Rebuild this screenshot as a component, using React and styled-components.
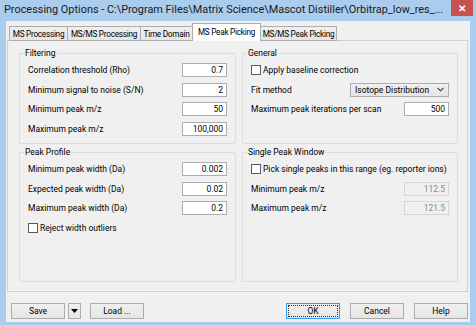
import React from "react";
import styled, { createGlobalStyle } from "styled-components";

const GlobalStyle = createGlobalStyle`
  html, body { margin: 0; padding: 0; background: #ffffff; }
  body { font-family: Roboto, "Liberation Sans", sans-serif; color: #000; }
`;

const Window = styled.div`
  width: 476px;
  height: 325px;
  background: #aacdee;
  display: flex;
  flex-direction: column;
  overflow: hidden;
`;

const TitleBar = styled.div`
  height: 21px;
  flex: none;
  display: flex;
  align-items: flex-start;
`;

const Title = styled.div`
  flex: 1;
  min-width: 0;
  padding: 3px 0 0 4px;
  font-size: 10.9px;
  line-height: 14px;
  color: #1a1a1a;
  white-space: nowrap;
  overflow: hidden;
`;

const CloseButton = styled.div`
  width: 22px;
  height: 16px;
  margin: 0 3px 0 4px;
  background: #c75050;
  color: #fff;
  display: flex;
  align-items: center;
  justify-content: center;
  font-size: 10px;
  font-weight: bold;
`;

const Client = styled.div`
  flex: 1;
  margin: 0 6px 3px 6px;
  background: #f0f0f0;
  padding: 3px 2px 0 1px;
  display: flex;
  flex-direction: column;
  font-size: 8.5px;
`;

const TabStrip = styled.div`
  height: 17px;
  display: flex;
  align-items: flex-end;
  padding-left: 2px;
  position: relative;
  z-index: 1;
  margin-bottom: -1px;
`;

const Tab = styled.div`
  width: ${(p) => p.$w}px;
  height: ${(p) => (p.$active ? 18 : 15)}px;
  margin-left: -1px;
  box-sizing: border-box;
  border: 1px solid #acacac;
  border-bottom: ${(p) => (p.$active ? "none" : "1px solid #acacac")};
  background: ${(p) => (p.$active ? "#ffffff" : "linear-gradient(#f0f0f0, #e5e5e5)")};
  display: flex;
  align-items: center;
  justify-content: center;
  white-space: nowrap;
  overflow: hidden;
  font-size: 8.2px;
  letter-spacing: -0.25px;
  padding-bottom: ${(p) => (p.$active ? 2 : 0)}px;
  &:first-child { margin-left: 0; }
`;

const Panel = styled.div`
  height: 252px;
  box-sizing: border-box;
  border: 1px solid #d0d0d0;
  background: #f0f0f0;
  display: grid;
  grid-template-columns: 217px 216px;
  grid-template-rows: 96px 135px;
  column-gap: 6px;
  row-gap: 3px;
  padding: 7px 0 0 11px;
`;

const Group = styled.fieldset`
  margin: 0;
  padding: 4px 8px 0 8px;
  border: 1px solid #dcdcdc;
  border-radius: 2px;
  min-width: 0;
  box-sizing: border-box;
`;

const Legend = styled.legend`
  padding: 0 1px;
  margin-left: -4px;
  line-height: 11px;
`;

const Rows = styled.div`
  display: flex;
  flex-direction: column;
  gap: 5.7px;
`;

const Row = styled.div`
  height: 14px;
  display: flex;
  align-items: center;
  justify-content: space-between;
  white-space: nowrap;
`;

const Field = styled.div`
  width: ${(p) => p.$w || 45}px;
  height: 14px;
  box-sizing: border-box;
  border: 1px solid ${(p) => (p.$disabled ? "#d5d5d5" : "#abadb3")};
  background: ${(p) => (p.$disabled ? "#f0f0f0" : "#ffffff")};
  color: ${(p) => (p.$disabled ? "#8a8a8a" : "#000")};
  text-align: right;
  padding-right: 3px;
  line-height: 12px;
`;

const Check = styled.label`
  display: flex;
  align-items: center;
  gap: 2px;
  white-space: nowrap;
`;

const Box = styled.span`
  width: 10px;
  height: 10px;
  box-sizing: border-box;
  border: 1px solid #5a5a5a;
  background: #fff;
`;

const Select = styled.div`
  width: 99px;
  height: 14px;
  box-sizing: border-box;
  border: 1px solid #acacac;
  background: linear-gradient(#f0f0f0, #e5e5e5);
  display: flex;
  align-items: center;
  justify-content: space-between;
  padding: 0 4px 0 4px;
`;

const Footer = styled.div`
  display: flex;
  align-items: center;
  margin-top: 11px;
  padding-left: 4px;
`;

const Button = styled.div`
  width: ${(p) => p.$w || 54}px;
  height: 16px;
  box-sizing: border-box;
  border: 1px solid ${(p) => (p.$default ? "#3399ff" : "#acacac")};
  background: linear-gradient(#f0f0f0, #e5e5e5);
  display: flex;
  align-items: center;
  justify-content: center;
  margin-left: ${(p) => p.$gap || 0}px;
  outline: ${(p) => (p.$default ? "1px dotted #333" : "none")};
  outline-offset: -3px;
`;

const Spacer = styled.div`
  flex: 1;
`;

const Chevron = () => (
  <svg width="7" height="5" viewBox="0 0 7 5">
    <polyline points="0.5,0.8 3.5,3.8 6.5,0.8" fill="none" stroke="#333" strokeWidth="1.1" />
  </svg>
);

const Triangle = () => (
  <svg width="7" height="4" viewBox="0 0 7 4">
    <polygon points="0,0 7,0 3.5,4" fill="#000" />
  </svg>
);

const NumRow = ({ label, value, disabled }) => (
  <Row>
    <span>{label}</span>
    <Field $disabled={disabled}>{value}</Field>
  </Row>
);

const App = () => {
  return (
    <>
      <GlobalStyle />
      <Window>
        <TitleBar>
          <Title>Processing Options - C:\Program Files\Matrix Science\Mascot Distiller\Orbitrap_low_res_...</Title>
          <CloseButton>✕</CloseButton>
        </TitleBar>
        <Client>
          <TabStrip>
            <Tab $w={59}>MS Processing</Tab>
            <Tab $w={74}>MS/MS Processing</Tab>
            <Tab $w={53}>Time Domain</Tab>
            <Tab $w={69} $active>MS Peak Picking</Tab>
            <Tab $w={77}>MS/MS Peak Picking</Tab>
          </TabStrip>
          <Panel>
            <Group>
              <Legend>Filtering</Legend>
              <Rows>
                <NumRow label="Correlation threshold (Rho)" value="0.7" />
                <NumRow label="Minimum signal to noise (S/N)" value="2" />
                <NumRow label="Minimum peak m/z" value="50" />
                <NumRow label="Maximum peak m/z" value="100,000" />
              </Rows>
            </Group>
            <Group>
              <Legend>General</Legend>
              <Rows>
                <Row>
                  <Check><Box />Apply baseline correction</Check>
                </Row>
                <Row>
                  <span>Fit method</span>
                  <Select>
                    <span>Isotope Distribution</span>
                    <Chevron />
                  </Select>
                </Row>
                <NumRow label="Maximum peak iterations per scan" value="500" />
              </Rows>
            </Group>
            <Group>
              <Legend>Peak Profile</Legend>
              <Rows>
                <NumRow label="Minimum peak width (Da)" value="0.002" />
                <NumRow label="Expected peak width (Da)" value="0.02" />
                <NumRow label="Maximum peak width (Da)" value="0.2" />
                <Row>
                  <Check><Box />Reject width outliers</Check>
                </Row>
              </Rows>
            </Group>
            <Group>
              <Legend>Single Peak Window</Legend>
              <Rows>
                <Row>
                  <Check><Box />Pick single peaks in this range (eg. reporter ions)</Check>
                </Row>
                <NumRow label="Minimum peak m/z" value="112.5" disabled />
                <NumRow label="Maximum peak m/z" value="121.5" disabled />
              </Rows>
            </Group>
          </Panel>
          <Footer>
            <Button>Save</Button>
            <Button $w={13} $gap={3}><Triangle /></Button>
            <Button $gap={9}>Load ...</Button>
            <Spacer />
            <Button $default>OK</Button>
            <Button $gap={10}>Cancel</Button>
            <Button $gap={10}>Help</Button>
          </Footer>
        </Client>
      </Window>
    </>
  );
};

export default App;
